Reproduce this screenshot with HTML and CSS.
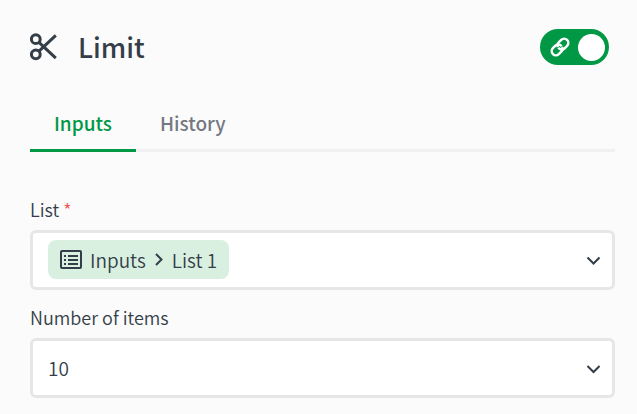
FILE: index.html
```html
<!DOCTYPE html>
<html lang="en">

  <head>
    <meta charset="UTF-8" />
    <title>Limit</title>
    <link rel="stylesheet" href="styles.css">
  </head>

  <body>

    <div class="panel">

      <header class="header">
        <svg class="scissors" viewBox="0 0 28 28" aria-hidden="true">
          <circle cx="5.8" cy="6.2" r="4.4" />
          <circle cx="5.8" cy="21.3" r="4.4" />
          <path d="M9 9.4L25.8 25.2M9 18.1L25.8 2.3" />
        </svg>
        <h1 class="title">Limit</h1>
        <label class="toggle">
          <input type="checkbox" class="toggle-input" aria-label="Linked" checked />
          <svg class="link-icon" viewBox="0 0 24 24" aria-hidden="true">
            <path d="M10 13a5 5 0 0 0 7.54.54l3-3a5 5 0 0 0-7.07-7.07l-3 3a5 5 0 0 0-.9 5.6" />
            <path d="M14 11a5 5 0 0 0-7.54-.54l-3 3a5 5 0 0 0 7.07 7.07l3-3a5 5 0 0 0 .9-5.6" />
          </svg>
          <span class="knob"></span>
        </label>
      </header>

      <div class="tabs" role="tablist">
        <button class="tab active" role="tab" aria-selected="true">Inputs</button>
        <button class="tab" role="tab" aria-selected="false">History</button>
      </div>

      <form class="form">

        <label class="label" for="list">List <span class="required">*</span></label>
        <button type="button" class="field" id="list">
          <span class="chip">
            <svg class="list-icon" viewBox="0 0 22 20" aria-hidden="true">
              <rect x="1" y="1" width="20" height="17" rx="1" />
              <path d="M8 6h10M8 10h10M8 14h10M4 6h2M4 10h2M4 14h2" />
            </svg>
            <span>Inputs</span>
            <svg class="separator" viewBox="0 0 8 14" aria-hidden="true">
              <path d="M1 1l5.5 5.5L1 12" />
            </svg>
            <span>List 1</span>
          </span>
          <svg class="chevron" viewBox="0 0 14 10" aria-hidden="true">
            <path d="M1.5 2.5l6 6 6-6" />
          </svg>
        </button>

        <label class="label" for="count">Number of items</label>
        <div class="select">
          <select class="field" id="count">
            <option>10</option>
          </select>
          <svg class="chevron" viewBox="0 0 14 10" aria-hidden="true">
            <path d="M1.5 2l6 6 6-6" />
          </svg>
        </div>

      </form>

    </div>

  </body>
</html>
```
FILE: styles.css
```css
* {
  box-sizing: border-box;
}

body {
  margin: 0;
  background-color: #fbfbfb;
  color: #333e48;
  font-family: "Noto Sans CJK SC", "Noto Sans", sans-serif;
  font-size: 18px;
  font-weight: 350;
  line-height: 24px;
}

button,
select {
  font: inherit;
  color: inherit;
  cursor: pointer;
}

svg {
  flex: none;
  fill: none;
  stroke: currentColor;
}

.panel {
  padding: 28px 22px 16px 30px;
}

.header {
  display: flex;
  align-items: center;
  padding-right: 6px;
}

.scissors {
  width: 28px;
  height: 28px;
  margin-right: 20px;
  stroke-width: 3;
}

.title {
  flex: 1;
  margin: 0;
  font-size: 27px;
  font-weight: 500;
  line-height: 38px;
}

.toggle {
  position: relative;
  display: flex;
  align-items: center;
  justify-content: space-between;
  width: 69px;
  height: 36px;
  padding: 0 4px 0 10px;
  border-radius: 18px;
  background-color: #009845;
  color: #fff;
  cursor: pointer;
}

.toggle-input {
  position: absolute;
  inset: 0;
  margin: 0;
  opacity: 0;
}

.link-icon {
  width: 20px;
  height: 20px;
  stroke-width: 3;
}

.knob {
  width: 27px;
  height: 27px;
  border-radius: 50%;
  background-color: #fff;
}

.tabs {
  display: flex;
  margin-top: 30px;
  box-shadow: inset 0 -3px #f0f0f0;
}

.tab {
  padding: 15px 24px 14px;
  border: none;
  border-bottom: 3px solid transparent;
  background: none;
  color: #737882;
  font-size: 19px;
  font-weight: 500;
}

.tab.active {
  border-color: #009845;
  color: #009845;
}

.form {
  display: flex;
  flex-direction: column;
  padding-top: 44px;
}

.label {
  padding: 1px 0 9px;
}

.required {
  color: #f05551;
}

.field {
  display: flex;
  align-items: center;
  justify-content: space-between;
  width: 100%;
  height: 60px;
  padding: 0 12px 1px 15px;
  border: 3px solid #e6e6e6;
  border-radius: 6px;
  background-color: #fff;
  font-size: 19px;
  appearance: none;
}

#list {
  margin-bottom: 14px;
}

.chip {
  display: flex;
  align-items: center;
  height: 39px;
  padding: 0 12px;
  border-radius: 8px;
  background-color: #d9f0e1;
}

.list-icon {
  width: 22px;
  height: 20px;
  margin-right: 8px;
  stroke-width: 2;
}

.separator {
  width: 8px;
  height: 14px;
  margin: 0 9px;
  stroke-width: 2;
}

.chevron {
  width: 14px;
  height: 10px;
  stroke-width: 2;
}

.select {
  position: relative;
}

.select .chevron {
  position: absolute;
  top: 26px;
  right: 15px;
  pointer-events: none;
}
```
